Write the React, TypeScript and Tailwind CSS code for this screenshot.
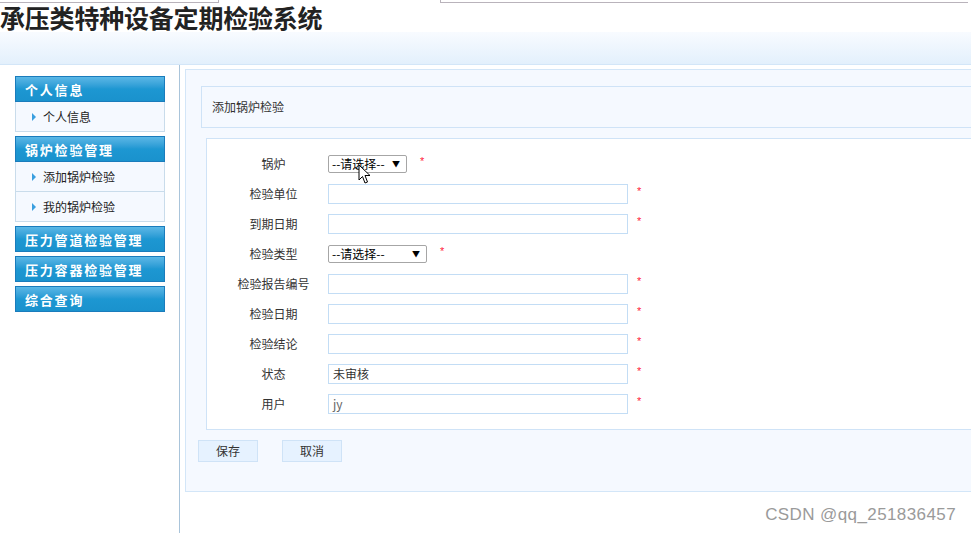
import React from "react";

const menu = [
  { title: "个人信息", items: ["个人信息"] },
  { title: "锅炉检验管理", items: ["添加锅炉检验", "我的锅炉检验"] },
  { title: "压力管道检验管理", items: [] },
  { title: "压力容器检验管理", items: [] },
  { title: "综合查询", items: [] },
];

type Field = { label: string; kind: "select" | "input"; width?: string; value?: string; muted?: boolean };

const fields: Field[] = [
  { label: "锅炉", kind: "select", width: "w-[79px]" },
  { label: "检验单位", kind: "input" },
  { label: "到期日期", kind: "input" },
  { label: "检验类型", kind: "select", width: "w-[99px]" },
  { label: "检验报告编号", kind: "input" },
  { label: "检验日期", kind: "input" },
  { label: "检验结论", kind: "input" },
  { label: "状态", kind: "input", value: "未审核" },
  { label: "用户", kind: "input", value: "jy", muted: true },
];

function Star({ gap }: { gap: string }) {
  return (
    <span className={`${gap} self-start mt-[7px] text-[11px] leading-none text-[#ff1a3c] font-['Liberation_Sans',sans-serif]`}>
      *
    </span>
  );
}

function Sidebar() {
  return (
    <div className="w-[180px] shrink-0 border-r border-[#a9c4da] pt-[11px] px-[15px]">
      {menu.map((g) => (
        <div key={g.title} className="mb-[4px] w-[150px]">
          <div className="h-[26px] border border-[#1a7cbc] bg-gradient-to-b from-[#5ab7e6] via-[#1d97d2] to-[#1a92cd] flex items-center pl-[9px] text-white text-[13px] font-bold tracking-[1.8px] leading-none">
            {g.title}
          </div>
          {g.items.map((it) => (
            <div
              key={it}
              className="h-[30px] border-x border-b border-[#c9dceb] bg-[#f5f9ff] flex items-center pl-[16px] pt-[1px] text-[12px] text-[#222]"
            >
              <span className="w-0 h-0 border-y-[4px] border-y-transparent border-l-[4px] border-l-[#3a9fe0] mr-[7px]" />
              {it}
            </div>
          ))}
        </div>
      ))}
    </div>
  );
}

function FormRow({ f }: { f: Field }) {
  return (
    <div className="h-[30px] flex items-center">
      <div className="w-[109px] text-center text-[12px] text-[#333]">{f.label}</div>
      {f.kind === "select" ? (
        <>
          <div
            className={`${f.width} h-[18px] border border-[#a6a6a6] rounded-[2px] bg-white flex items-center justify-between pl-[3px] pr-[6px] text-[12px] text-black leading-none`}
          >
            <span>--请选择--</span>
            <span className="text-[8px]">▼</span>
          </div>
          <Star gap="ml-[13px]" />
        </>
      ) : (
        <>
          <div
            className={`w-[300px] h-[20px] border border-[#c3ddf5] bg-white flex items-center pl-[4px] text-[12px] ${
              f.muted ? "text-[#666]" : "text-[#333]"
            }`}
          >
            {f.value}
          </div>
          <Star gap="ml-[9px]" />
        </>
      )}
    </div>
  );
}

export default function App() {
  return (
    <div className="relative w-[971px] h-[533px] overflow-hidden bg-white font-['Noto_Sans_CJK_SC',sans-serif]">
      {/* leftover browser edge */}
      <div className="flex h-[3px]">
        <div className="w-[219px] border-b border-r border-[#b9b3bb]" />
        <div className="w-[221px]" />
        <div className="w-[528px] border-b border-l border-[#b9b3bb]" />
      </div>

      <div className="h-[29px] text-[25px] leading-[29px] font-bold text-[#222] tracking-[-0.2px]">
        承压类特种设备定期检验系统
      </div>

      <div className="h-[33px] bg-gradient-to-b from-[#f8fbff] to-[#e3f0fc] border-b border-[#d3e6f8]" />

      <div className="flex h-[468px]">
        <Sidebar />

        <div className="flex-1 pl-[5px] pt-[4px]">
          <div className="h-[423px] border-y border-l border-[#d3e6f8] bg-[#f5f9ff] pt-[16px] pl-[15px]">
            <div className="h-[42px] border-y border-l border-[#cfe3f7] bg-[#f5f9ff] flex items-center pl-[10px] text-[12px] text-[#333]">
              添加锅炉检验
            </div>

            <div className="ml-[5px] mt-[10px] border-y border-l border-[#cfe3f7] bg-white py-[10px] pl-[12px]">
              {fields.map((f) => (
                <FormRow key={f.label} f={f} />
              ))}
            </div>

            <div className="flex gap-[24px] mt-[10px] -ml-[3px]">
              {["保存", "取消"].map((b) => (
                <div
                  key={b}
                  className="w-[60px] h-[22px] border border-[#cfe3f7] bg-[#e6f2ff] flex items-center justify-center text-[12px] text-[#333]"
                >
                  {b}
                </div>
              ))}
            </div>
          </div>
        </div>
      </div>

      {/* mouse pointer caught in the screenshot */}
      <svg className="absolute left-[358px] top-[164px]" width="13" height="21" viewBox="0 0 13 21">
        <path d="M1 1 L1 16 L4.5 12.5 L7 19 L9.5 18 L7 11.5 L12 11.5 Z" fill="white" stroke="black" strokeWidth="1" strokeLinejoin="round" />
      </svg>

      <div className="absolute right-[15px] top-[502px] text-[17px] tracking-[0.4px] text-[#9a9a9a] font-['Liberation_Sans',sans-serif]">
        CSDN @qq_251836457
      </div>
    </div>
  );
}
